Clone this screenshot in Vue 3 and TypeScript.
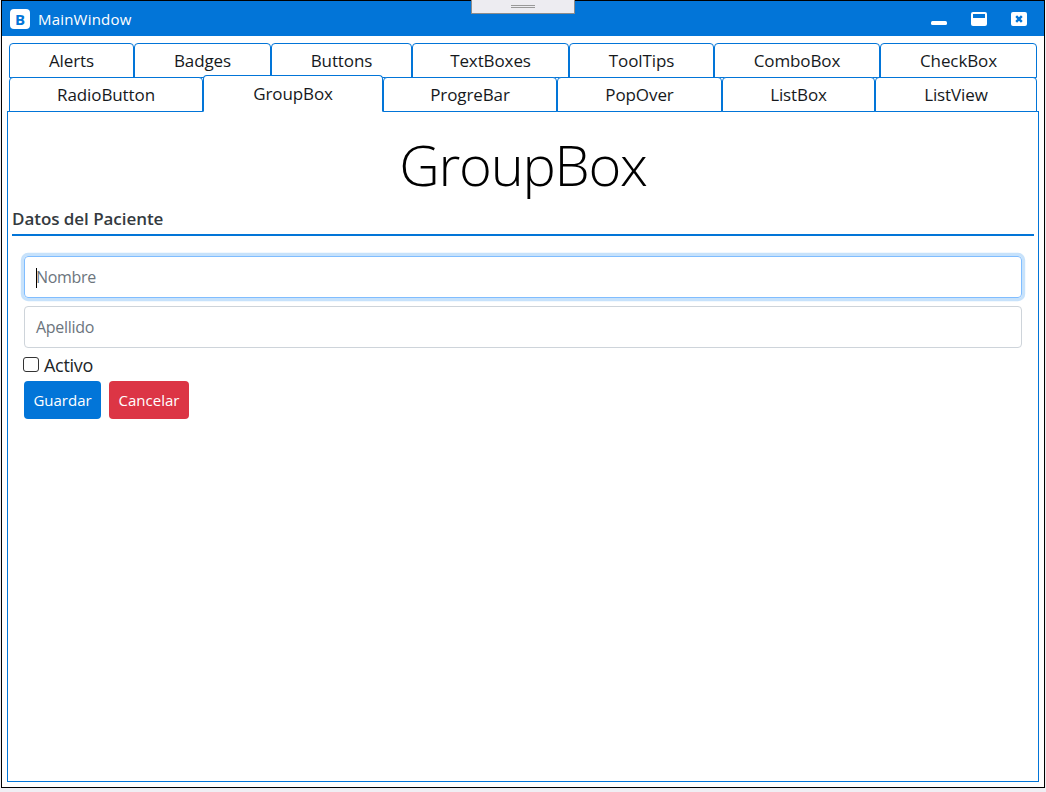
<script setup lang="ts">
const row1 = [
  { label: 'Alerts', w: 125 },
  { label: 'Badges', w: 137 },
  { label: 'Buttons', w: 141 },
  { label: 'TextBoxes', w: 157 },
  { label: 'ToolTips', w: 145 },
  { label: 'ComboBox', w: 166 },
  { label: 'CheckBox', w: 157 },
]
const row2 = [
  { label: 'RadioButton', w: 194 },
  { label: 'GroupBox', w: 180, active: true },
  { label: 'ProgreBar', w: 174 },
  { label: 'PopOver', w: 165 },
  { label: 'ListBox', w: 153 },
  { label: 'ListView', w: 162 },
]
</script>

<template>
  <div class="window">
    <header class="titlebar">
      <div class="brand">B</div>
      <span class="title">MainWindow</span>
      <div class="grip"><i></i><i></i></div>
      <div class="controls">
        <svg width="16" height="16" viewBox="0 0 16 16"><rect x="0" y="10" width="16" height="4" rx="1.5" fill="#fff" /></svg>
        <svg width="16" height="16" viewBox="0 0 16 16"><rect y="1" width="16" height="14" rx="2" fill="#fff" /><rect x="2" y="3" width="12" height="4" fill="#0275d8" /></svg>
        <svg width="16" height="16" viewBox="0 0 16 16"><rect width="16" height="14" y="1" rx="2" fill="#fff" /><path d="M5.2 5.2l5.6 5.6M10.8 5.2l-5.6 5.6" stroke="#0275d8" stroke-width="2.4" /></svg>
      </div>
    </header>
    <div class="body">
      <nav class="tabs">
        <div class="tabrow">
          <button v-for="t in row1" :key="t.label" class="tab" :style="{ width: t.w + 'px' }">{{ t.label }}</button>
        </div>
        <div class="tabrow">
          <button v-for="t in row2" :key="t.label" class="tab" :class="{ active: t.active }" :style="{ width: t.w + 'px' }">{{ t.label }}</button>
        </div>
      </nav>
      <section class="panel">
        <h1>GroupBox</h1>
        <div class="group-head">Datos del Paciente</div>
        <form class="form" @submit.prevent>
          <div class="input focus"><span class="caret"></span>Nombre</div>
          <div class="input">Apellido</div>
          <label class="check"><span class="box"></span>Activo</label>
          <div class="btns">
            <button class="btn primary">Guardar</button>
            <button class="btn danger">Cancelar</button>
          </div>
        </form>
      </section>
    </div>
  </div>
</template>

<style>
html, body { margin: 0; background: #f0eff4; }
</style>

<style scoped>
.window {
  box-sizing: border-box;
  width: 1044px;
  height: 788px;
  margin-left: 1px;
  border: 1px solid #000;
  background: #fff;
  font-family: "Open Sans", "Noto Sans", sans-serif;
}
.titlebar {
  position: relative;
  height: 35px;
  background: #0275d8;
  display: flex;
  align-items: center;
  padding-left: 8px;
  color: #fff;
}
.brand {
  width: 20px;
  height: 20px;
  margin-top: 1px;
  border-radius: 4px;
  background: #fff;
  color: #0275d8;
  font: 700 15px/20px "Open Sans", sans-serif;
  text-align: center;
}
.title { margin-left: 8px; font-size: 15px; letter-spacing: 0.2px; }
.grip {
  position: absolute;
  left: 469px;
  top: -1px;
  width: 102px;
  height: 8px;
  background: #edecf1;
  border: 1px solid #8c8c8c;
  border-top: 0;
  display: flex;
  flex-direction: column;
  align-items: center;
  gap: 1px;
  padding-top: 5px;
  box-sizing: content-box;
}
.grip i { display: block; width: 24px; height: 1px; background: #999; }
.controls { margin-left: auto; display: flex; gap: 24px; padding-right: 17px; }
.body { padding: 7px 5px 0 5px; }
.tabs { padding-left: 2px; display: flex; flex-direction: column; }
.tabrow { display: flex; height: 34px; align-items: flex-end; }
.tab {
  box-sizing: border-box;
  height: 35px;
  margin-bottom: -1px;
  padding: 0;
  border: 1px solid #0275d8;
  border-radius: 4px 4px 0 0;
  background: #fff;
  color: #16191c;
  font: 400 17px/1 "Open Sans", sans-serif;
  letter-spacing: -0.1px;
}
.tab.active {
  height: 37px;
  border-bottom-color: #fff;
  position: relative;
  z-index: 2;
  padding-bottom: 1px;
}
.panel {
  box-sizing: border-box;
  height: 671px;
  width: 1032px;
  border: 1px solid #0275d8;
  padding: 0 4px;
}
h1 {
  margin: 16px 0 0;
  font: 300 56px/72px "Open Sans", sans-serif;
  letter-spacing: -1.25px;
  text-align: center;
  color: #000;
}
.group-head {
  margin-top: 8px;
  font: 600 17px/22px "Open Sans", sans-serif;
  letter-spacing: -0.05px;
  color: #343a40;
  padding-bottom: 4px;
  border-bottom: 2px solid #0275d8;
}
.form { padding: 20px 12px 0 12px; }
.input {
  position: relative;
  box-sizing: border-box;
  height: 42px;
  border: 1px solid #ced4da;
  border-radius: 4px;
  padding-left: 11px;
  font-size: 16px;
  line-height: 40px;
  letter-spacing: -0.3px;
  color: #6c757d;
  margin-bottom: 8px;
}
.input.focus {
  border-color: #80bdff;
  box-shadow: 0 0 0 3.2px #c7e2fb;
}
.caret {
  position: absolute;
  left: 11px;
  top: 11px;
  width: 1px;
  height: 20px;
  background: #000;
}
.check {
  display: flex;
  align-items: center;
  height: 17px;
  margin-left: -1px;
  font-size: 18px;
  letter-spacing: -0.3px;
  color: #212529;
}
.box {
  box-sizing: border-box;
  width: 16px;
  height: 15px;
  border: 1px solid #333;
  border-radius: 3px;
  margin-right: 5px;
}
.btns { display: flex; gap: 8px; margin-top: 8px; }
.btn {
  box-sizing: border-box;
  height: 38px;
  border: 0;
  border-radius: 4px;
  color: #fff;
  font: 400 15px "Open Sans", sans-serif;
  padding: 0;
}
.primary { width: 77px; background: #0275d8; }
.danger { width: 80px; background: #dc3545; }
</style>
